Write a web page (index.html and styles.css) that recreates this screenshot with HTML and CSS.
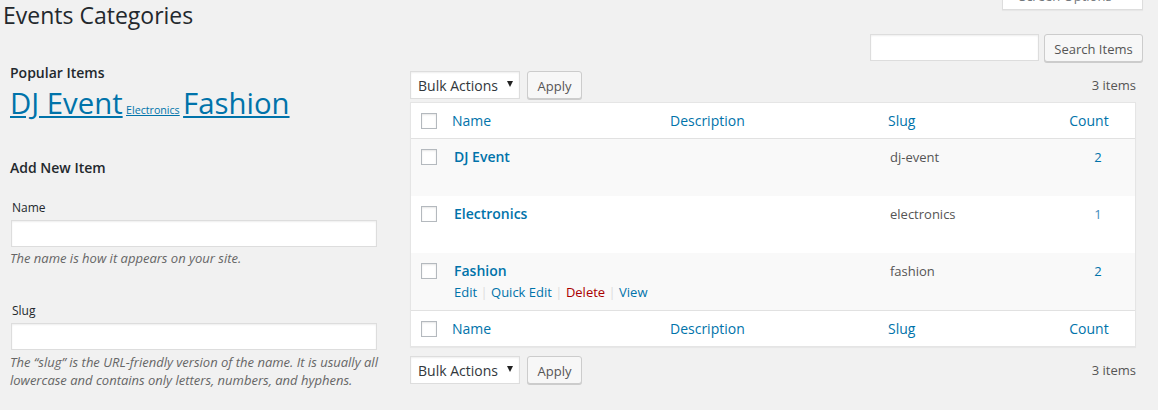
FILE: index.html
```html
<!DOCTYPE html>
<html lang="en">
<head>
<meta charset="utf-8">
<title>Events Categories</title>
<link rel="stylesheet" href="styles.css">
</head>
<body>
<div class="wrap">
  <div class="screen-tab">Screen Options</div>
  <h1 class="page-title">Events Categories</h1>
  <form class="search-box">
    <input type="search" class="search-input" aria-label="Search Items">
    <button type="button" class="button">Search Items</button>
  </form>
  <div class="col-container">
    <div class="col-left">
      <h2 class="section-title">Popular Items</h2>
      <p class="tags"><a class="tag tag-lg" href="#">DJ Event</a> <a class="tag tag-sm" href="#">Electronics</a> <a class="tag tag-lg" href="#">Fashion</a></p>
      <h2 class="section-title add-title">Add New Item</h2>
      <div class="form-field">
        <label class="field-label">Name</label>
        <input type="text" class="text-input">
        <p class="desc">The name is how it appears on your site.</p>
      </div>
      <div class="form-field slug-field">
        <label class="field-label">Slug</label>
        <input type="text" class="text-input">
        <p class="desc slug-desc">The “slug” is the URL-friendly version of the name. It is usually all lowercase and contains only letters, numbers, and hyphens.</p>
      </div>
    </div>
    <div class="col-right">
      <div class="tablenav tablenav-top">
        <div class="select">Bulk Actions<span class="arrow"></span></div>
        <button type="button" class="button apply">Apply</button>
        <span class="num-items">3 items</span>
      </div>
      <table class="list">
        <colgroup>
          <col class="c-check"><col class="c-name"><col class="c-desc"><col class="c-slug"><col class="c-count">
        </colgroup>
        <thead>
          <tr>
            <th class="check"><span class="cb"></span></th>
            <th><a href="#">Name</a></th>
            <th><a href="#">Description</a></th>
            <th><a href="#">Slug</a></th>
            <th class="num"><a href="#">Count</a></th>
          </tr>
        </thead>
        <tbody>
          <tr class="alt">
            <td class="check"><span class="cb"></span></td>
            <td><a class="row-title" href="#">DJ Event</a></td>
            <td></td>
            <td>dj-event</td>
            <td class="num"><a href="#">2</a></td>
          </tr>
          <tr>
            <td class="check"><span class="cb"></span></td>
            <td><a class="row-title" href="#">Electronics</a></td>
            <td></td>
            <td>electronics</td>
            <td class="num"><a class="light" href="#">1</a></td>
          </tr>
          <tr class="alt">
            <td class="check"><span class="cb"></span></td>
            <td><a class="row-title" href="#">Fashion</a>
              <div class="row-actions"><a href="#">Edit</a> <span class="sep">|</span> <a href="#">Quick Edit</a> <span class="sep">|</span> <a class="delete" href="#">Delete</a> <span class="sep">|</span> <a href="#">View</a></div>
            </td>
            <td></td>
            <td>fashion</td>
            <td class="num"><a href="#">2</a></td>
          </tr>
        </tbody>
        <tfoot>
          <tr>
            <th class="check"><span class="cb"></span></th>
            <th><a href="#">Name</a></th>
            <th><a href="#">Description</a></th>
            <th><a href="#">Slug</a></th>
            <th class="num"><a href="#">Count</a></th>
          </tr>
        </tfoot>
      </table>
      <div class="tablenav tablenav-bottom">
        <div class="select">Bulk Actions<span class="arrow"></span></div>
        <button type="button" class="button apply">Apply</button>
        <span class="num-items">3 items</span>
      </div>
    </div>
  </div>
</div>
</body>
</html>
```

FILE: styles.css
```css
* { box-sizing: border-box; }

html, body {
  margin: 0;
  background: #f1f1f1;
}

body {
  font-family: "Open Sans", "Liberation Sans", sans-serif;
  font-size: 13px;
  color: #444;
  overflow: hidden;
}

a { color: #0073aa; text-decoration: none; }

.wrap {
  position: relative;
}

.screen-tab {
  position: absolute;
  top: -17px;
  right: 15px;
  width: 141px;
  height: 27px;
  padding: 0 16px;
  line-height: 27px;
  background: #fff;
  border: 1px solid #ddd;
  border-top: 0;
  box-shadow: 0 1px 1px rgba(0,0,0,.04);
  color: #72777c;
  font-size: 13px;
  white-space: nowrap;
}

.page-title {
  margin: 0;
  padding: 1px 0 0 3px;
  font-size: 23px;
  font-weight: 400;
  line-height: 29px;
  color: #23282d;
}

.search-box {
  margin: 4px 0 0;
  padding-right: 15px;
  display: flex;
  justify-content: flex-end;
  gap: 5px;
  height: 27px;
}

.search-input,
.text-input {
  background: #fff;
  border: 1px solid #ddd;
  box-shadow: inset 0 1px 2px rgba(0,0,0,.07);
  height: 27px;
  margin: 0;
  font: inherit;
  outline: none;
}

.search-input { width: 169px; }

.button {
  height: 28px;
  padding: 2px 0 0;
  margin: 0;
  background: #f7f7f7;
  border: 1px solid #ccc;
  border-radius: 3px;
  box-shadow: 0 1px 0 #ccc;
  color: #555;
  font-family: inherit;
  font-size: 13px;
  line-height: 24px;
  white-space: nowrap;
}

.search-box .button { width: 99px; }

.col-container {
  display: flex;
  gap: 32px;
  padding: 0 22px 0 10px;
}

.col-left {
  width: 368px;
  flex: none;
  padding-top: 2px;
}

.col-right {
  flex: 1;
  padding-top: 10px;
}

.section-title {
  margin: 0;
  font-size: 14px;
  font-weight: 600;
  line-height: 19px;
  color: #23282d;
}

.tags {
  margin: 4px 0 0;
  font-size: 13px;
  line-height: 1.2;
}

.tag { text-decoration: underline; }
.tag-lg { font-size: 29.33px; }
.tag-sm { font-size: 10.67px; }

.add-title { margin-top: 37px; }

.form-field { margin-top: 22px; }
.slug-field { margin-top: 35px; }

.field-label {
  display: block;
  padding-left: 2px;
  font-size: 12px;
  line-height: 18px;
  color: #23282d;
}

.text-input {
  display: block;
  width: 366px;
  margin: 3px 0 0 1px;
}

.desc {
  margin: 2px 0 0;
  font-size: 13px;
  font-style: italic;
  line-height: 18px;
  color: #666;
}

.slug-desc { margin-top: 3px; }

.tablenav {
  display: flex;
  align-items: flex-start;
  height: 28px;
  gap: 7px;
}

.tablenav-top { margin-bottom: 3px; }
.tablenav-bottom { margin-top: 9px; }

.select {
  position: relative;
  width: 110px;
  height: 28px;
  padding: 1px 7px 0;
  background: #fff;
  border: 1px solid #ddd;
  box-shadow: inset 0 1px 2px rgba(0,0,0,.07);
  color: #32373c;
  font-size: 14px;
  line-height: 26px;
}

.arrow {
  position: absolute;
  right: 6px;
  top: 9px;
  width: 0;
  height: 0;
  border-left: 3px solid transparent;
  border-right: 3px solid transparent;
  border-top: 6px solid #222;
}

.apply { width: 55px; }

.num-items {
  margin-left: auto;
  color: #555;
  font-size: 13px;
  line-height: 28px;
}

.list {
  width: 100%;
  table-layout: fixed;
  border-spacing: 0;
  background: #fff;
  border: 1px solid #e5e5e5;
  box-shadow: 0 1px 1px rgba(0,0,0,.04);
}

.c-check { width: 33px; }
.c-name { width: 218px; }
.c-desc { width: 218px; }
.c-slug { width: 181px; }
.c-count { width: 74px; }

.list th {
  padding: 8px;
  text-align: left;
  font-weight: 400;
  font-size: 14px;
  line-height: 19px;
}

.list thead th { border-bottom: 1px solid #e1e1e1; }
.list tfoot th { border-top: 1px solid #e1e1e1; }

.list th.check {
  padding: 0 0 0 10px;
  vertical-align: middle;
}

.list th.num {
  text-align: center;
  padding-right: 26px;
}

.list td {
  height: 57px;
  padding: 8px 10px;
  vertical-align: top;
  font-size: 13px;
  line-height: 20px;
  color: #555;
}

.list td.check { padding: 10px 0 0 10px; }
.list td.num { text-align: center; }

.list tr.alt td { background: #f9f9f9; }

.cb {
  display: block;
  width: 16px;
  height: 16px;
  background: #fff;
  border: 1px solid #b4b9be;
  box-shadow: inset 0 1px 2px rgba(0,0,0,.1);
}

.row-title {
  font-size: 14px;
  font-weight: 600;
}

.num .light { color: #3f8cbd; }

.row-actions {
  padding-top: 2px;
  font-size: 13px;
  line-height: 19px;
}

.row-actions .sep { color: #ddd; }
.row-actions .delete { color: #a00; }
```
